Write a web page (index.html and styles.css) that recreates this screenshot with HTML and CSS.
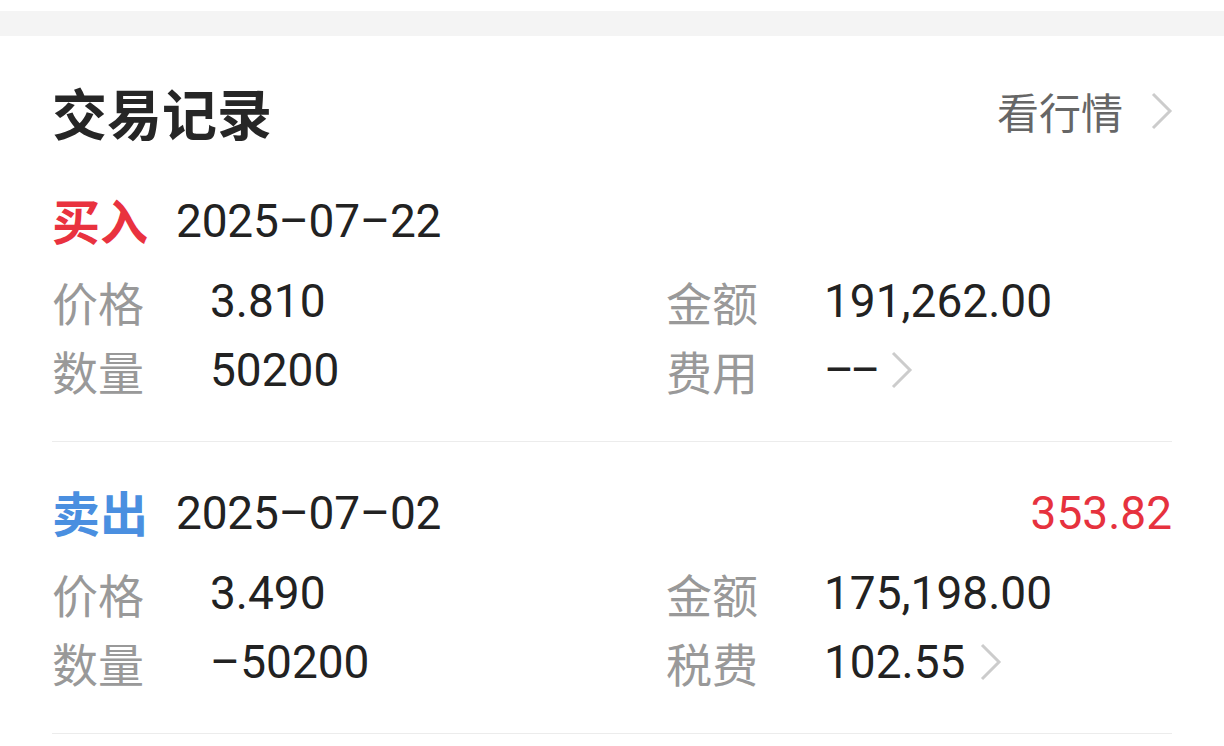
FILE: index.html
```html
<!DOCTYPE html>
<html lang="zh-CN">
<head>
<meta charset="utf-8">
<title>交易记录</title>
<link rel="stylesheet" href="styles.css">
</head>
<body>
<div class="band"></div>
<section class="card">
  <div class="card-head">
    <h2 class="title">交易记录</h2>
    <a class="more">看行情<svg class="chev chev-head" viewBox="0 0 24 40"><path d="M3 3 L20 20 L3 37"/></svg></a>
  </div>

  <div class="trade">
    <div class="trade-head">
      <span class="side buy">买入</span>
      <span class="date">2025–07–22</span>
    </div>
    <div class="grid">
      <div class="field"><span class="label">价格</span><span class="val">3.810</span></div>
      <div class="field"><span class="label">金额</span><span class="val">191,262.00</span></div>
      <div class="field"><span class="label">数量</span><span class="val">50200</span></div>
      <div class="field"><span class="label">费用</span><span class="val dashes">––</span><svg class="chev chev-row" viewBox="0 0 24 40"><path d="M3 3 L20 20 L3 37"/></svg></div>
    </div>
  </div>

  <div class="trade">
    <div class="trade-head">
      <span class="side sell">卖出</span>
      <span class="date">2025–07–02</span>
      <span class="pnl">353.82</span>
    </div>
    <div class="grid">
      <div class="field"><span class="label">价格</span><span class="val">3.490</span></div>
      <div class="field"><span class="label">金额</span><span class="val">175,198.00</span></div>
      <div class="field"><span class="label">数量</span><span class="val">–50200</span></div>
      <div class="field"><span class="label">税费</span><span class="val">102.55</span><svg class="chev chev-row" viewBox="0 0 24 40"><path d="M3 3 L20 20 L3 37"/></svg></div>
    </div>
  </div>
</section>
</body>
</html>
```

FILE: styles.css
```css
* { box-sizing: border-box; }

html, body {
  margin: 0;
  padding: 0;
  background: #ffffff;
}

body {
  font-family: "Noto Sans CJK SC", "Noto Sans", sans-serif;
  color: #222222;
}

.band {
  margin-top: 11px;
  height: 25px;
  background: #f4f4f4;
}

.card {
  padding: 0 52px;
}

.card-head {
  margin-top: 41px;
  margin-bottom: 5px;
  height: 68px;
  display: flex;
  align-items: center;
  justify-content: space-between;
}

.title {
  margin: 0;
  font-size: 55px;
  font-weight: 700;
  line-height: 1;
  color: #262626;
}

.more {
  display: flex;
  align-items: center;
  font-size: 42px;
  line-height: 1;
  color: #666666;
}

.chev {
  display: block;
  fill: none;
  stroke: #cccccc;
  stroke-width: 3;
  stroke-linecap: butt;
  stroke-linejoin: miter;
}

.chev-head {
  width: 24px;
  height: 40px;
  margin-left: 27px;
  margin-right: -2px;
}

.chev-row {
  width: 24px;
  height: 40px;
  margin-left: 14px;
}

.trade {
  padding-top: 43px;
  padding-bottom: 37px;
  border-bottom: 1px solid #ececec;
}

.trade-head {
  height: 56px;
  display: flex;
  align-items: center;
}

.side {
  font-size: 48px;
  font-weight: 700;
  line-height: 1;
  position: relative;
  top: -2px;
}

.buy { color: #e9323f; }
.sell { color: #4a8fe0; }

.date,
.val,
.pnl {
  font-family: Roboto, "Noto Sans CJK SC", sans-serif;
  font-size: 46px;
  line-height: 1;
  color: #222222;
}

.date {
  margin-left: 28px;
  letter-spacing: -0.2px;
}

.dashes {
  letter-spacing: -4px;
}

.pnl {
  margin-left: auto;
  color: #e6323e;
}

.grid {
  margin-top: 17px;
  display: grid;
  grid-template-columns: 614px 1fr;
  grid-auto-rows: 69px;
  align-items: center;
}

.field {
  display: flex;
  align-items: center;
}

.label {
  width: 158px;
  font-size: 46px;
  line-height: 1;
  color: #999999;
}
```
